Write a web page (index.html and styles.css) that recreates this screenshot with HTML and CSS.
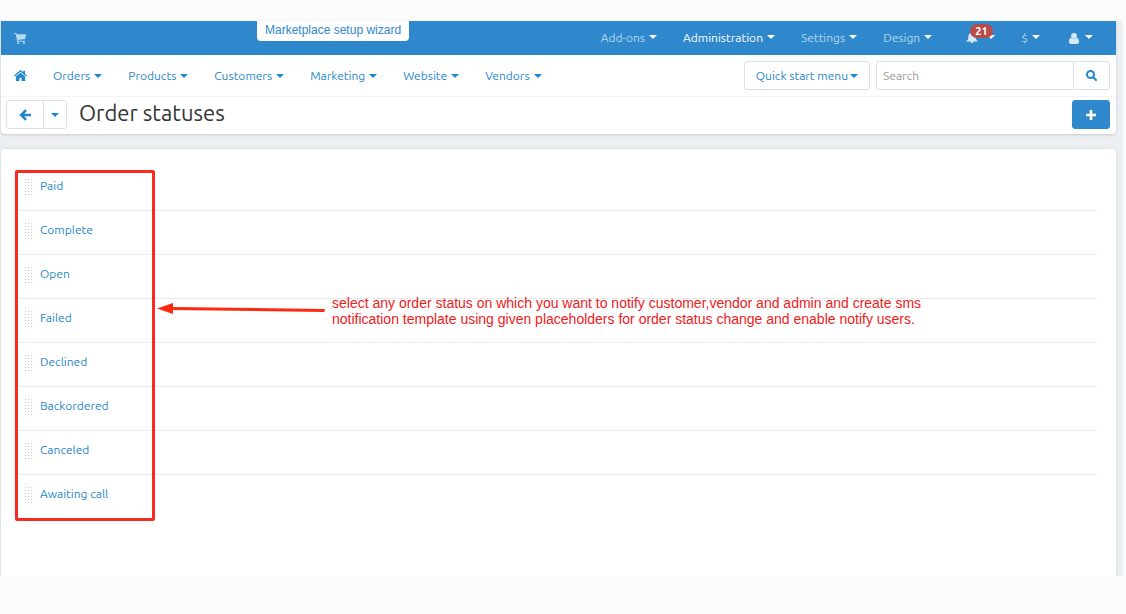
FILE: index.html
```html
<!DOCTYPE html>
<html lang="en">
<head>
    <meta charset="UTF-8">
    <meta name="viewport" content="width=device-width, initial-scale=1.0">
    <title>Order statuses</title>
    <link rel="stylesheet" href="styles.css">
</head>
<body>
    <div class="screen">
        <div class="header">
            <!-- Top bar -->
            <div class="topbar">
                <a href="#" class="cart" aria-label="Storefront">
                    <svg width="12" height="11" viewBox="0 0 12 11"><path d="M0 0h2.4l.4 1.2H12L11.200 6 3.900 6.900l.2.8H11v1H3.200L1.700 1H0z"/><circle cx="4.200" cy="9.900" r="1"/><circle cx="10" cy="9.900" r="1"/></svg>
                </a>
                <a href="#" class="wizard">Marketplace setup wizard</a>
                <nav class="top-menu">
                    <a href="#">Add-ons<i class="caret"></i></a>
                    <a href="#" class="active">Administration<i class="caret"></i></a>
                    <a href="#">Settings<i class="caret"></i></a>
                    <a href="#">Design<i class="caret"></i></a>
                    <a href="#" class="bell" aria-label="Notifications">
                        <svg width="12" height="12" viewBox="0 0 12 12"><path d="M6 0c.5 0 .8.3.8.8C8.700 1.200 9.600 2.700 9.600 4.500c0 2.500.8 3.900 2.400 5H7.500a1.500 1.500 0 0 1-3 0H0c1.600-1.100 2.400-2.500 2.400-5 0-1.800.9-3.300 2.800-3.700C5.200.3 5.500 0 6 0z"/></svg>
                        <span class="badge">21</span>
                        <i class="caret"></i>
                    </a>
                    <a href="#">$<i class="caret"></i></a>
                    <a href="#" class="user" aria-label="Account">
                        <svg width="10" height="11" viewBox="0 0 10 11"><circle cx="5" cy="2.900" r="2.900"/><path d="M2 4.800C.6 5.200 0 6.800 0 8.800 0 10.200.8 11 2 11h6c1.200 0 2-.8 2-2.200 0-2-.6-3.600-2-4-1.600 1.700-4.400 1.700-6 0z"/></svg>
                        <i class="caret"></i>
                    </a>
                </nav>
            </div>

            <!-- Main menu -->
            <div class="menubar">
                <nav class="main-menu">
                    <a href="#" class="home" aria-label="Home">
                        <svg width="13" height="11" viewBox="0 0 12 10"><path d="M6 0l2.500 2.100V.7h1.700v2.900L12 5.100l-.7.8L6 1.500.7 5.900 0 5.100z"/><path d="M6 2.400l4.300 3.500V10H7V7H5v3H1.700V5.900z"/></svg>
                    </a>
                    <a href="#">Orders<i class="caret"></i></a>
                    <a href="#">Products<i class="caret"></i></a>
                    <a href="#">Customers<i class="caret"></i></a>
                    <a href="#">Marketing<i class="caret"></i></a>
                    <a href="#">Website<i class="caret"></i></a>
                    <a href="#">Vendors<i class="caret"></i></a>
                </nav>
                <button type="button" class="quick-menu">Quick start menu<i class="caret"></i></button>
                <form class="search">
                    <input type="text" placeholder="Search" aria-label="Search">
                    <button type="submit" aria-label="Find">
                        <svg width="11" height="11" viewBox="0 0 11 11"><circle cx="4.500" cy="4.500" r="3.500" fill="none" stroke="currentColor" stroke-width="2"/><path d="M7.200 7.200l2.800 2.800" stroke="currentColor" stroke-width="2" stroke-linecap="round"/></svg>
                    </button>
                </form>
            </div>

            <!-- Page title -->
            <div class="titlebar">
                <div class="back-group">
                    <button type="button" class="back" aria-label="Back">
                        <svg width="12" height="12" viewBox="0 0 12 12"><path d="M7 1.200L2.200 6 7 10.800M2.500 6H12" fill="none" stroke="currentColor" stroke-width="2.600"/></svg>
                    </button>
                    <button type="button" class="history" aria-label="Recent pages"><i class="caret"></i></button>
                </div>
                <h1>Order statuses</h1>
                <button type="button" class="add" aria-label="Add status">
                    <svg width="10" height="10" viewBox="0 0 10 10"><path d="M5 0v10M0 5h10" stroke="currentColor" stroke-width="2.600"/></svg>
                </button>
            </div>
        </div>

        <!-- Statuses -->
        <div class="content">
            <div class="statuses">
                <ul>
                    <li><span class="grip"></span><a href="#">Paid</a></li>
                    <li><span class="grip"></span><a href="#">Complete</a></li>
                    <li><span class="grip"></span><a href="#">Open</a></li>
                    <li><span class="grip"></span><a href="#">Failed</a></li>
                    <li><span class="grip"></span><a href="#">Declined</a></li>
                    <li><span class="grip"></span><a href="#">Backordered</a></li>
                    <li><span class="grip"></span><a href="#">Canceled</a></li>
                    <li><span class="grip"></span><a href="#">Awaiting call</a></li>
                </ul>
                <div class="highlight"></div>
                <div class="note">
                    <svg width="168" height="12" viewBox="0 0 168 12"><path d="M14 5.500L166.500 7.500" stroke="#fb2a10" stroke-width="3" stroke-linecap="round"/><path d="M0 5.500L16 0v11z" fill="#fb2a10"/></svg>
                    <p>select any order status on which you want to notify customer,vendor and admin and create sms<br>notification template using given placeholders for order status change and enable notify users.</p>
                </div>
            </div>
        </div>
    </div>
</body>
</html>
```
FILE: styles.css
```css
* {
    box-sizing: border-box;
}

body {
    margin: 0;
    padding: 21px 3px 38px 0;
    background-color: #fbfbfb;
    font-family: Ubuntu, "Open Sans", sans-serif;
    font-size: 12px;
    line-height: 20px;
    color: #333;
}

a {
    color: #1f87cc;
    text-decoration: none;
}

button {
    display: flex;
    align-items: center;
    justify-content: center;
    padding: 0;
    font: inherit;
    color: #1f87cc;
    background-color: #fff;
    border: 1px solid #d9e1e8;
}

svg {
    display: block;
    fill: currentColor;
}

.screen {
    padding: 0 7px 0 1px;
    background-color: #ebeff2;
}

.caret {
    border: 4px solid transparent;
    border-top-color: currentColor;
    border-bottom: 0;
    margin-left: 4px;
}

/* Header */
.header {
    background-color: #fff;
    border-radius: 0 0 4px 4px;
    box-shadow: 0 1px 3px rgba(0, 0, 0, 0.15);
}

.topbar {
    display: flex;
    align-items: center;
    height: 34px;
    padding: 0 23px 0 13px;
    background-color: #2f88cc;
}

.topbar a {
    color: #b4d8ee;
}

.topbar .wizard {
    align-self: flex-start;
    height: 20px;
    margin-left: 231px;
    padding: 0 8px;
    font-family: "Liberation Sans", Arial, sans-serif;
    line-height: 18px;
    color: #2f88cc;
    background-color: #fff;
    border-radius: 0 0 4px 4px;
}

.top-menu {
    display: flex;
    gap: 26px;
    margin-left: auto;
}

.top-menu a,
.main-menu a {
    display: flex;
    align-items: center;
}

.topbar .active {
    color: #fff;
}

.top-menu .caret {
    margin-bottom: 3px;
    color: #fff;
}

.topbar .bell {
    position: relative;
    margin-left: 8px;
    color: #d5e8f6;
}

.bell .caret {
    margin-left: 9px;
}

.badge {
    position: absolute;
    top: -4px;
    left: 4px;
    padding: 0 5px;
    font-size: 11px;
    font-weight: bold;
    line-height: 14px;
    color: #fff;
    background-color: #b94a48;
    border-radius: 7px;
}

.topbar .user {
    margin-left: 3px;
    color: #d5e8f6;
}

.user .caret {
    margin-left: 6px;
}

.menubar {
    display: flex;
    align-items: center;
    height: 41px;
    padding: 0 6px 0 13px;
}

.main-menu {
    display: flex;
    gap: 26px;
    margin-right: auto;
}

.quick-menu {
    height: 29px;
    padding: 0 11px;
    border-radius: 3px;
}

.quick-menu .caret {
    margin-left: 2px;
}

.search {
    display: flex;
    width: 234px;
    margin-left: 6px;
}

.search input {
    flex: 1;
    min-width: 0;
    height: 29px;
    padding: 0 6px;
    font: inherit;
    border: 1px solid #d9e1e8;
    border-right: 0;
    border-radius: 3px 0 0 3px;
}

.search input::placeholder {
    color: #999;
}

.search button {
    width: 37px;
    border-radius: 0 3px 3px 0;
}

.titlebar {
    display: flex;
    align-items: center;
    height: 38px;
    padding: 0 6px 2px 5px;
    border-top: 1px solid #f3f4f6;
}

.back-group {
    display: flex;
}

.back-group button {
    height: 29px;
}

.back-group .back {
    width: 38px;
    border-radius: 3px 0 0 3px;
}

.back-group .history {
    width: 24px;
    margin-left: -1px;
    border-radius: 0 3px 3px 0;
}

.history .caret {
    margin: 0;
}

.titlebar h1 {
    margin: 0 auto 0 12px;
    padding-bottom: 4px;
    font-size: 22px;
    font-weight: normal;
    line-height: 30px;
}

.titlebar .add {
    width: 38px;
    height: 29px;
    color: #fff;
    background-color: #2f88cc;
    border-color: #2f88cc;
    border-radius: 3px;
}

/* Content */
.content {
    margin-top: 15px;
    padding: 18px 19px 57px 18px;
    background-color: #fff;
    border-radius: 3px 3px 0 0;
    box-shadow: 0 0 3px rgba(0, 0, 0, 0.12);
    clip-path: inset(-3px -3px 0 -1px);
}

.statuses {
    position: relative;
}

.statuses ul {
    margin: 0;
    padding: 0;
    list-style: none;
}

.statuses li {
    display: flex;
    height: 44px;
    padding: 9px 6px;
    border-bottom: 1px solid #e8eaec;
}

.statuses li:last-child {
    border-bottom: 0;
}

.grip {
    width: 7px;
    height: 18px;
    margin: 3px 8px 0 0;
    background: conic-gradient(from 0deg at 1px 1px, transparent 75%, #c8c8c8 0) 0 0 / 3px 3px;
}

/* Callout over the list */
.highlight {
    position: absolute;
    top: 3px;
    bottom: -2px;
    left: -4px;
    width: 140px;
    border: 3px solid #fb2a20;
    border-radius: 2px;
}

.note {
    position: absolute;
    top: 128px;
    left: 138px;
    display: flex;
    align-items: flex-start;
    gap: 7px;
    color: #f0201c;
}

.note svg {
    margin-top: 8px;
}

.note p {
    margin: 0;
    font-family: "Liberation Sans", Arial, sans-serif;
    font-size: 14px;
    line-height: 16px;
}
```
